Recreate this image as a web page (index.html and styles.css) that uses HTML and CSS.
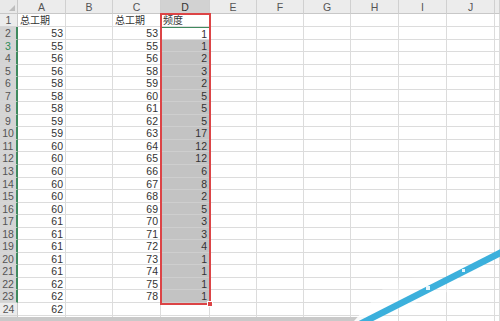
FILE: index.html
```html
<!DOCTYPE html>
<html lang="zh-CN">
<head>
    <meta charset="UTF-8">
    <title>频度统计</title>
    <link rel="stylesheet" href="styles.css">
</head>
<body>
    <div class="sheet">
        <div class="grid" id="grid"></div>

        <!-- annotation box drawn over column D -->
        <div class="mark-box"><span class="mark-handle"></span></div>

        <div class="hscroll"></div>

        <svg class="watermark" width="150" height="80" viewBox="0 0 150 80">
            <defs>
                <linearGradient id="fade" x1="0" y1="1" x2="0" y2="0">
                    <stop offset="0" stop-color="#fff" stop-opacity="0.95"/>
                    <stop offset="1" stop-color="#fff" stop-opacity="0"/>
                </linearGradient>
            </defs>
            <polygon points="4,80 40,40 90,32 100,50 12,80" fill="url(#fade)"/>
            <line x1="10" y1="83" x2="152" y2="11" stroke="#3cb0dc" stroke-width="6.5"/>
            <rect x="76" y="45" width="4" height="4" fill="#e8f6fb"/>
            <rect x="112" y="28" width="3" height="3" fill="#e8f6fb"/>
        </svg>
    </div>

    <script>
        const colA = [53, 55, 56, 56, 58, 58, 58, 59, 59, 60, 60, 60, 60, 60, 60, 61, 61, 61, 61, 61, 62, 62, 62];
        const colC = [53, 55, 56, 58, 59, 60, 61, 62, 63, 64, 65, 66, 67, 68, 69, 70, 71, 72, 73, 74, 75, 78];
        const colD = [1, 1, 2, 3, 2, 5, 5, 5, 17, 12, 12, 6, 8, 2, 5, 3, 3, 4, 1, 1, 1, 1];
        const letters = ['A', 'B', 'C', 'D', 'E', 'F', 'G', 'H', 'I', 'J', ''];

        const grid = document.getElementById('grid');

        function cell(text, cls) {
            const div = document.createElement('div');
            div.className = cls;
            div.textContent = text;
            grid.appendChild(div);
        }

        // column headers
        cell('', 'corner');
        letters.forEach(l => cell(l, l === 'D' ? 'col-head selected' : 'col-head'));

        for (let r = 1; r <= 25; r++) {
            let headCls = 'row-head';
            if (r >= 2 && r <= 23) headCls += ' selected';
            if (r === 3) headCls += ' current';
            cell(r <= 24 ? r : '', headCls);

            letters.forEach(l => {
                let text = '';
                let cls = 'cell';
                if (r === 1) {
                    if (l === 'A' || l === 'C') text = '总工期';
                    if (l === 'D') text = '频度';
                    cls += ' label';
                } else {
                    if (l === 'A' && colA[r - 2] !== undefined) text = colA[r - 2];
                    if (l === 'C' && colC[r - 2] !== undefined) text = colC[r - 2];
                    if (l === 'D' && colD[r - 2] !== undefined) text = colD[r - 2];
                }
                if (l === 'D' && r === 2) cls += ' active';
                if (l === 'D' && r >= 3 && r <= 23) cls += ' range';
                cell(text, cls);
            });
        }
    </script>
</body>
</html>
```

FILE: styles.css
```css
body {
    margin: 0;
    background: #fff;
    overflow: hidden;
    font-family: "Liberation Sans", "Noto Sans CJK SC", sans-serif;
}
.sheet {
    position: relative;
    width: 500px;
    height: 321px;
    overflow: hidden;
}
.grid {
    display: grid;
    grid-template-columns: 18px 48px 47px 48px 49px 47px 47px 47px 48px 48px 48px 1fr;
    grid-template-rows: 14px 13px repeat(24, 12.55px);
    font-size: 10.5px;
    color: #333;
}
.grid > div {
    box-sizing: border-box;
    white-space: nowrap;
    overflow: hidden;
}
.corner {
    position: relative;
    background: #e9e9e9;
    border-right: 1px solid #c8c8c8;
    border-bottom: 1px solid #c8c8c8;
}
.corner::after {
    content: "";
    position: absolute;
    right: 2px;
    bottom: 2px;
    border-left: 6px solid transparent;
    border-bottom: 6px solid #bdbdbd;
}
.col-head {
    background: #ececec;
    color: #555;
    text-align: center;
    line-height: 14px;
    border-right: 1px solid #d0d0d0;
    border-bottom: 1px solid #c8c8c8;
}
.col-head.selected {
    background: #d2d2d2;
    color: #333;
}
.row-head {
    background: #ececec;
    color: #555;
    text-align: center;
    line-height: 13px;
    border-right: 1px solid #c8c8c8;
    border-bottom: 1px solid #d6d6d6;
}
.row-head.selected {
    background: #d4d4d4;
    border-right: 2px solid #3f8a5e;
}
.row-head.current {
    color: #2e8b57;
}
.cell {
    text-align: right;
    padding: 0 2px;
    line-height: 13px;
    border-right: 1px solid #dcdcdc;
    border-bottom: 1px solid #dcdcdc;
}
.cell.label {
    text-align: left;
    line-height: 14px;
    font-size: 10px;
}
.cell.active {
    border-top: 1px solid #3f8a5e;
    line-height: 12px;
}
.cell.range {
    background: #c3c3c3;
    border-right-color: #c3c3c3;
    border-bottom-color: #cecece;
}
.mark-box {
    position: absolute;
    left: 160px;
    top: 13px;
    width: 51px;
    height: 292px;
    box-sizing: border-box;
    border: 2px solid #dc4446;
}
.mark-handle {
    position: absolute;
    right: -4px;
    bottom: -4px;
    width: 4px;
    height: 4px;
    background: #dc4446;
    border: 1px solid #fff;
}
.hscroll {
    position: absolute;
    left: 0;
    top: 317px;
    width: 365px;
    height: 4px;
    background: #c9c9c9;
}
.watermark {
    position: absolute;
    right: 0;
    bottom: 0;
}
```
